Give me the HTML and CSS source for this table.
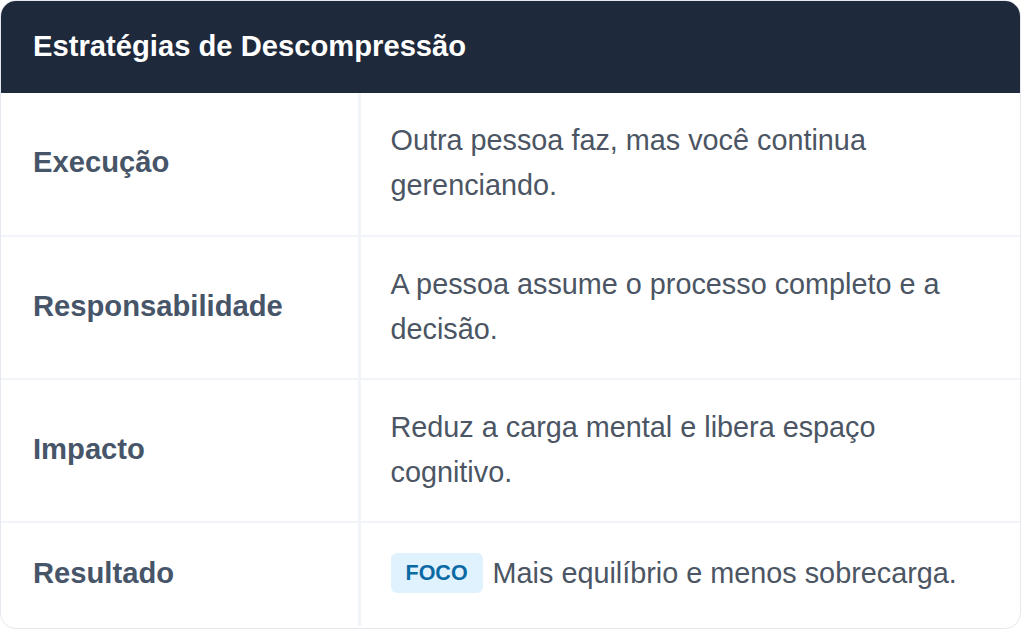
FILE: index.html
```html
<!DOCTYPE html>
<html lang="pt">
<head>
<meta charset="utf-8">
<link rel="stylesheet" href="styles.css">
</head>
<body>
<div class="card">
  <div class="card-header">Estratégias de Descompressão</div>
  <table class="grid">
    <tr>
      <th>Execução</th>
      <td>Outra pessoa faz, mas você continua gerenciando.</td>
    </tr>
    <tr>
      <th>Responsabilidade</th>
      <td>A pessoa assume o processo completo e a decisão.</td>
    </tr>
    <tr>
      <th>Impacto</th>
      <td>Reduz a carga mental e libera espaço cognitivo.</td>
    </tr>
    <tr class="last">
      <th>Resultado</th>
      <td><span class="badge">FOCO</span>Mais equilíbrio e menos sobrecarga.</td>
    </tr>
  </table>
</div>
</body>
</html>
```
FILE: styles.css
```css
html, body {
  margin: 0;
  padding: 0;
  background: #ffffff;
}
body {
  font-family: "Liberation Sans", Arial, Helvetica, sans-serif;
  color: #475569;
}
.card {
  width: 1021px;
  height: 629px;
  box-sizing: border-box;
  border-radius: 16px;
  overflow: hidden;
  background: #ffffff;
  border: 1px solid #e5e9ef;
}
.card-header {
  height: 92px;
  box-sizing: border-box;
  background: #1e293b;
  color: #ffffff;
  font-weight: 700;
  font-size: 29.2px;
  padding: 0 0 2px 32px;
  display: flex;
  align-items: center;
}
.grid {
  width: 100%;
  border-collapse: collapse;
}
.grid th, .grid td {
  box-sizing: border-box;
  text-align: left;
  vertical-align: middle;
  line-height: 45px;
  border-bottom: 2px solid #f1f5f9;
  height: 143px;
}
.grid th {
  width: 358px;
  font-size: 29.2px;
  font-weight: 700;
  padding: 0 0 3px 32px;
  border-right: 3px solid #f1f5f9;
}
.grid td {
  font-size: 28.8px;
  font-weight: 400;
  color: #4b5563;
  padding: 24px 60px 26px 30px;
}
.grid tr.last th, .grid tr.last td {
  border-bottom: none;
  height: 104px;
}
.badge {
  display: inline-block;
  vertical-align: middle;
  background: #e0f2fe;
  color: #0b6aa3;
  font-weight: 700;
  font-size: 21.5px;
  line-height: 40px;
  padding: 0 15px;
  border-radius: 6px;
  margin-right: 10px;
  position: relative;
  top: -2px;
}
```
